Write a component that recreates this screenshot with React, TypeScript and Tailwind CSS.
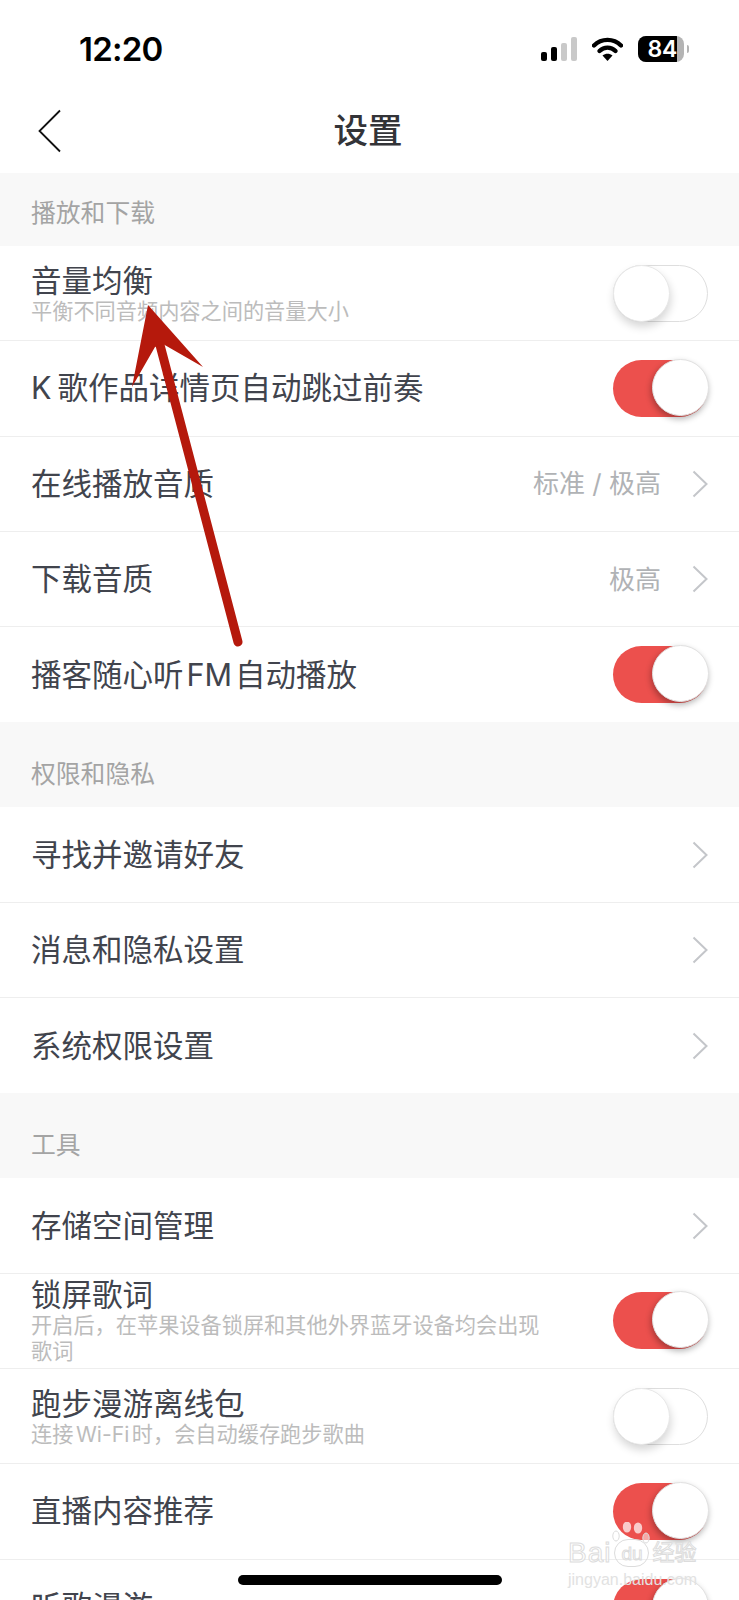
import React from "react";

const FONT = '"Inter", "Noto Sans CJK SC", sans-serif';

function Toggle({ on }: { on: boolean }) {
  return (
    <div
      className={`relative h-[57px] w-[95px] shrink-0 rounded-full ${
        on ? "bg-[#ec504d]" : "border border-[#dedede] bg-white"
      }`}
    >
      <div
        className={`absolute h-[57px] w-[57px] rounded-full bg-white ${
          on
            ? "-right-px -top-px border border-[#e2e2e2] shadow-[-1px_3px_6px_rgba(0,0,0,0.3)]"
            : "-left-px -top-px border border-[#e8e8e8] shadow-[1px_5px_8px_rgba(0,0,0,0.16)]"
        }`}
      />
    </div>
  );
}

function Chevron() {
  return (
    <svg width="16" height="28" viewBox="0 0 16 28" fill="none" className="shrink-0">
      <path d="M1.5 1.5 L14.5 14 L1.5 26.5" stroke="#c4c6ca" strokeWidth="2" />
    </svg>
  );
}

type RowProps = {
  title: React.ReactNode;
  sub?: React.ReactNode;
  value?: string;
  toggle?: boolean;
  arrow?: boolean;
  last?: boolean;
};

function Row({ title, sub, value, toggle, arrow, last }: RowProps) {
  return (
    <div
      className={`flex h-[95.3px] items-center justify-between pl-[31px] pr-[31px] ${
        last ? "" : "border-b border-[#eeeeee]"
      }`}
    >
      <div className="min-w-0 flex-1">
        <div className="whitespace-nowrap text-[30.5px] leading-[36px] text-[#41444d]">{title}</div>
        {sub && <div className="-mt-[1px] w-[515px] text-[21.2px] leading-[26px] text-[#bcbcbc]">{sub}</div>}
      </div>
      {toggle !== undefined && <Toggle on={toggle} />}
      {arrow && (
        <div className="flex items-center gap-[31px]">
          {value && <span className="whitespace-nowrap text-[26px] text-[#b0b2b5]">{value}</span>}
          <Chevron />
        </div>
      )}
    </div>
  );
}

function SectionHead({ label, h }: { label: string; h: string }) {
  return (
    <div className={`flex items-center bg-[#f8f8f8] pl-[31px] text-[24.8px] text-[#a4a4a4] ${h}`}>{label}</div>
  );
}

function StatusIcons() {
  return (
    <div className="flex items-center gap-[15px]">
      <svg width="36" height="24" viewBox="0 0 36 24">
        <rect x="0" y="15" width="6" height="9" rx="2" fill="#000" />
        <rect x="10" y="10" width="6" height="14" rx="2" fill="#000" />
        <rect x="20" y="6" width="6" height="18" rx="2" fill="#c9c9c9" />
        <rect x="30" y="0" width="6" height="24" rx="2" fill="#c9c9c9" />
      </svg>
      <svg width="31" height="24" viewBox="0 0 31 24">
        <path d="M2 8.5 C9.5 1 21.5 1 29 8.5" stroke="#000" strokeWidth="4.4" fill="none" strokeLinecap="round" />
        <path d="M7.5 14 C12 9.5 19 9.5 23.5 14" stroke="#000" strokeWidth="4.4" fill="none" strokeLinecap="round" />
        <path d="M15.5 24 L10.5 18.6 C13.5 16 17.5 16 20.5 18.6 Z" fill="#000" />
      </svg>
      <div className="flex items-center gap-[3px]">
        <div className="flex h-[26px] w-[46px] overflow-hidden rounded-[8px] bg-[#b4b4b4]">
          <div className="flex h-full w-[39px] items-center justify-end bg-black text-[23px] font-semibold leading-none tracking-[-0.3px] text-white">
            84
          </div>
        </div>
        <div className="h-[8px] w-[2px] rounded-r-full bg-[#b4b4b4]" />
      </div>
    </div>
  );
}

function Arrow() {
  return (
    <svg
      className="pointer-events-none absolute left-0 top-0"
      width="260"
      height="660"
      viewBox="0 0 260 660"
      fill="none"
    >
      <path d="M160 345 L238 642" stroke="#b5190c" strokeWidth="9" strokeLinecap="round" />
      <path d="M148 305 L203 367 L163 344 L155 347 L132 387 Z" fill="#b5190c" />
    </svg>
  );
}

function Watermark() {
  const outline =
    "text-white/60 [-webkit-text-stroke:1px_#dcdcdc] [font-family:'Liberation_Sans','Noto_Sans_CJK_SC',sans-serif]";
  return (
    <div className="pointer-events-none absolute left-[568px] top-[1522px] w-[132px]">
      <svg width="44" height="24" viewBox="0 0 44 24" className="absolute left-[44px] top-0" fill="none">
        <ellipse cx="15" cy="5" rx="4.2" ry="5.5" fill="#ffffff" fillOpacity="0.7" />
        <ellipse cx="26" cy="6" rx="4.2" ry="5.5" fill="#ffffff" fillOpacity="0.7" />
        <ellipse cx="4" cy="14" rx="3.2" ry="5" fill="#ffffff" fillOpacity="0.5" stroke="#dcdcdc" />
        <ellipse cx="34" cy="16" rx="3.2" ry="5" fill="#ffffff" fillOpacity="0.5" stroke="#dcdcdc" />
      </svg>
      <div className={`mt-[16px] flex h-[30px] items-center whitespace-nowrap ${outline}`}>
        <span className="text-[28px] leading-[30px] tracking-[1px]">Bai</span>
        <span className="ml-[3px] flex h-[28px] w-[35px] items-center justify-center rounded-full border border-[#dcdcdc] text-[19px] leading-none">
          du
        </span>
        <span className="ml-[3px] text-[22px] leading-[30px]">经验</span>
      </div>
      <div className="mt-[3px] whitespace-nowrap text-[16px] leading-[18px] text-[#e2e2e2] [font-family:'Liberation_Sans',sans-serif]">
        jingyan.baidu.com
      </div>
    </div>
  );
}

export default function App() {
  return (
    <div className="relative h-[1600px] w-[739px] overflow-hidden bg-white" style={{ fontFamily: FONT }}>
      {/* status bar */}
      <div className="flex h-[98px] items-start justify-between pl-[79px] pr-[50px] pt-[36px]">
        <span className="text-[33px] font-semibold leading-[26px] tracking-[-0.8px] text-black">12:20</span>
        <StatusIcons />
      </div>
      {/* nav */}
      <div className="relative flex h-[75px] items-start justify-center">
        <svg width="24" height="44" viewBox="0 0 24 44" fill="none" className="absolute left-[38px] top-[11px]">
          <path d="M22 1.5 L1.5 22 L22 42.5" stroke="#111" strokeWidth="1.8" />
        </svg>
        <span className="-ml-[3px] mt-[12px] text-[34.5px] font-medium leading-[42px] text-[#333438]">设置</span>
      </div>

      <SectionHead label="播放和下载" h="h-[73px] pt-[9px]" />
      <Row title="音量均衡" sub="平衡不同音频内容之间的音量大小" toggle={false} />
      <Row
        title={
          <>
            <span className="mr-[6px]">K</span>歌作品详情页自动跳过前奏
          </>
        }
        toggle={true}
      />
      <Row title="在线播放音质" value="标准 / 极高" arrow />
      <Row title="下载音质" value="极高" arrow />
      <Row
        title={
          <>
            播客随心听<span className="mx-[3px]">FM</span>自动播放
          </>
        }
        toggle={true}
        last
      />

      <SectionHead label="权限和隐私" h="h-[85px] pt-[20px]" />
      <Row title="寻找并邀请好友" arrow />
      <Row title="消息和隐私设置" arrow />
      <Row title="系统权限设置" arrow last />

      <SectionHead label="工具" h="h-[85px] pt-[20px]" />
      <Row title="存储空间管理" arrow />
      <Row title="锁屏歌词" sub="开启后，在苹果设备锁屏和其他外界蓝牙设备均会出现歌词" toggle={true} />
      <Row
        title="跑步漫游离线包"
        sub={
          <>
            连接<span className="mx-[2.5px]">Wi-Fi</span>时，会自动缓存跑步歌曲
          </>
        }
        toggle={false}
      />
      <Row title="直播内容推荐" toggle={true} />
      <Row title="听歌漫游" toggle={true} last />

      <Arrow />
      <Watermark />
      <div className="absolute left-[238px] top-[1575px] h-[10px] w-[264px] rounded-full bg-black" />
    </div>
  );
}
